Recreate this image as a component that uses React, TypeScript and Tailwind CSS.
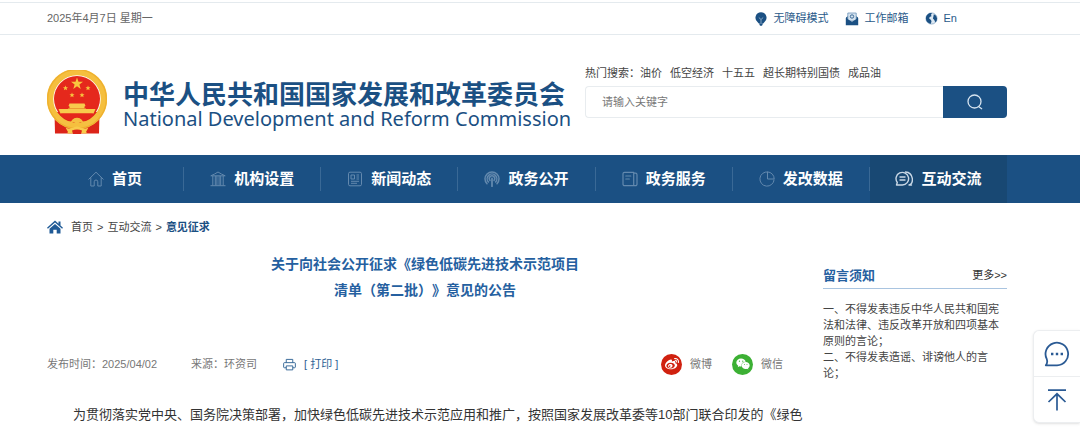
import React from 'react';
import { FaWeibo, FaWeixin } from 'react-icons/fa';

type IconProps = { className?: string };

const HomeIcon = ({ className }: IconProps) => (
  <svg viewBox="0 0 16 16" fill="none" stroke="currentColor" strokeLinejoin="round" strokeLinecap="round" className={className}>
    <path d="M.8 8.200 8 1.200l7.200 7M2.800 6.800V15h3.400v-4.200a1.800 1.800 0 0 1 3.600 0V15h3.400V6.800" />
  </svg>
);

const InstitutionIcon = ({ className }: IconProps) => (
  <svg viewBox="0 0 16 16" fill="none" stroke="currentColor" strokeLinejoin="round" className={className}>
    <path d="M.8 4.800C3 3.800 6 2.500 8 1c2 1.500 5 2.800 7.200 3.800zM.5 14.700h15" />
    <path d="M2.800 5v9.500M5.300 5v9.500M6.900 5v9.500M9.100 5v9.500M10.700 5v9.500M13.200 5v9.500" />
  </svg>
);

const NewsIcon = ({ className }: IconProps) => (
  <svg viewBox="0 0 16 16" fill="none" stroke="currentColor" strokeLinejoin="round" className={className}>
    <rect x="1.500" y="1.200" width="13" height="13.600" rx="1.500" />
    <path d="M4 4h3.500v4H4zM9.500 4H12M9.500 6H12M9.500 8H12M4 10.300h8M4 12.300h6" />
  </svg>
);

const OpenIcon = ({ className }: IconProps) => (
  <svg viewBox="0 0 16 16" fill="none" stroke="currentColor" strokeLinecap="round" className={className}>
    <path d="M3 12.800a7 7 0 1 1 10 0M4.400 11a4.800 4.800 0 1 1 7.200 0M6 9.400a2.700 2.700 0 1 1 4 0" strokeWidth="1.500" />
    <path d="M8 7.500v7.700" strokeWidth="1.800" />
  </svg>
);

const ServiceIcon = ({ className }: IconProps) => (
  <svg viewBox="0 0 16 16" fill="none" stroke="currentColor" strokeWidth="1.200" strokeLinejoin="round" strokeLinecap="round" className={className}>
    <path d="M2.500 1.300h9.200v13.400H2.500A1.500 1.500 0 0 1 1 13.200V2.800a1.500 1.500 0 0 1 1.500-1.500zM11.700 2.200H13.500a1.500 1.500 0 0 1 1.500 1.500v9.500a1.500 1.500 0 0 1-1.500 1.500h-1.800M3.800 5h5M3.800 8h3.500" />
  </svg>
);

const DataIcon = ({ className }: IconProps) => (
  <svg viewBox="0 0 16 16" fill="none" stroke="currentColor" strokeLinejoin="round" className={className}>
    <path d="M9 1A7.100 7.100 0 1 0 15.100 8.500" />
    <path d="M8.500.9V8h6.700A7 7 0 0 0 8.500.9z" />
  </svg>
);

const InteractIcon = ({ className }: IconProps) => (
  <svg viewBox="0 0 18 16" fill="none" stroke="currentColor" strokeWidth="1.400" strokeLinejoin="round" strokeLinecap="round" className={className}>
    <path d="M2.300 11.500A6.300 6.300 0 1 1 7.300 14H1.500z" />
    <path d="M10.500 1c8.500.5 8.500 12.500 3.500 13h2.500M5 6h5M5 9h5" />
  </svg>
);

const NAV_ITEMS = [
  { label: '首页', Icon: HomeIcon },
  { label: '机构设置', Icon: InstitutionIcon },
  { label: '新闻动态', Icon: NewsIcon },
  { label: '政务公开', Icon: OpenIcon },
  { label: '政务服务', Icon: ServiceIcon },
  { label: '发改数据', Icon: DataIcon },
  { label: '互动交流', Icon: InteractIcon, active: true },
];

const HOT_WORDS = ['油价', '低空经济', '十五五', '超长期特别国债', '成品油'];

const SMALL_STARS = [[18.500, 18], [41, 18], [25, 25], [35, 25]];

const Emblem = () => (
  <svg viewBox="0 0 60 64" className="w-[60px] h-16 shrink-0" role="img" aria-label="国徽">
    <path d="M7.500 42 8 63.500h44L52.500 42z" fill="#dc2419" />
    <circle cx="30" cy="29" r="27" fill="none" stroke="#f5bf3e" strokeWidth="6.500" />
    <circle cx="30" cy="29" r="29.300" fill="none" stroke="#eeb02f" strokeWidth="1.200" />
    <circle cx="30" cy="29" r="23" fill="#e5281c" />
    <path d="m30 7.500 1.500 4.300h4.500l-3.600 2.700 1.300 4.400L30 16.300l-3.700 2.600 1.300-4.400-3.600-2.700h4.500z" fill="#f8c63f" />
    {SMALL_STARS.map(([x, y]) => (
      <path key={x} transform={`translate(${x} ${y})`} d="m0-2.500.7 1.700h1.800L1.100.4l.5 1.900L0 1.200l-1.600 1.100.5-1.900-1.400-1.200h1.800z" fill="#f8c63f" />
    ))}
    <path d="M22.500 33.500h15l1 2.500-1 .5V39H48.500l-2 4.500h-33L11.500 39h11v-2.500l-1-.5z" fill="#f8cb4c" />
    <path d="M21 38.500h18" stroke="#e8912c" strokeWidth=".8" />
    <path d="M14 43.500h32c-3 4-8 5-11 4.500-3-1.500-7-1.500-10 0-3 .5-8-.5-11-4.500z" fill="#e5281c" />
    <path d="M11 45c4 5 8 7 13 6.500a7 7 0 0 1 12 0C41 52 45 50 49 45l2 3c-4 6-9 8-14 7.500a8 8 0 0 0-14 0C18 56 13 54 9 48z" fill="#f5c042" />
    <path d="M25 51a5.500 5.500 0 0 1 10 0l-5 3z" fill="#f5c042" />
    <path d="M18.500 57.500c4 2.500 7 0 11.500-1 4.500 1 7.500 3.500 11.500 1l-2.500 4.500 1.500 1.500H20l1-1.500z" fill="#f8cb4c" />
    <path d="M25 60.500c3-1.500 7-1.500 10 0l-1 3.500h-8z" fill="#dc2419" />
  </svg>
);

const BulbIcon = () => (
  <svg viewBox="0 0 14 14" className="size-[14px]">
    <path d="M7 .3a5.500 5.500 0 0 0-3.300 9.900L4.800 11.500h4.400l1.100-1.300A5.500 5.500 0 0 0 7 .3z" fill="#1b5083" />
    <path d="M4.800 5.500 7 7.500l2.200-2M7 7.500V11" fill="none" stroke="#9fbad3" strokeWidth=".8" />
    <path d="M5 11.500h4L8 13.800H6z" fill="#1b5083" />
  </svg>
);

const MailIcon = () => (
  <svg viewBox="0 0 14 14" className="size-[14px]">
    <path d="M1 5.500 3 4v5H1zM13 5.500 11 4v5h2z" fill="#1b5083" />
    <path d="M2.800 1h8.400v8H2.800z" fill="#d5e2ee" stroke="#6f95b9" strokeWidth=".8" />
    <circle cx="7" cy="4.500" r="1.700" fill="none" stroke="#1b5083" strokeWidth=".8" />
    <path d="M.8 6 7 9.800 13.200 6v7.300H.8z" fill="#1b5083" />
  </svg>
);

const GlobeIcon = () => (
  <svg viewBox="0 0 14 14" className="size-[13px]">
    <circle cx="7" cy="7" r="6" fill="#dce8f2" stroke="#7fa1c1" strokeWidth=".8" />
    <path d="M2.500 3C4 1.300 6 1 7.500 1.200L6.500 3l.5 1.500-2 1L4.500 7l2 1.500.5 2L6 12.800C3 12 1 10 1 7c0-1.700.5-3 1.500-4z" fill="#1b5083" />
    <path d="M9.500 2.500 12 4l1 3-.5 2.800-1.500 1.200-1-2.500L8.500 7 9 5z" fill="#1b5083" />
  </svg>
);

const TopBar = () => (
  <div className="h-[33px] border-y border-[#e4eaee] pr-[26px]">
    <div className="mx-auto flex h-full max-w-[960px] items-center justify-between">
      <span className="text-[#666]">2025年4月7日 星期一</span>
      <div className="mr-[50px] flex items-center gap-4 text-[#2a5a8a]">
        <a href="#accessible" className="flex items-center gap-1.5"><BulbIcon />无障碍模式</a>
        <a href="#mail" className="flex items-center gap-1.5"><MailIcon />工作邮箱</a>
        <a href="#en" className="flex items-center gap-1.5"><GlobeIcon />En</a>
      </div>
    </div>
  </div>
);

const Header = () => (
  <header className="h-[120px] pt-[30px] pr-[26px]">
    <div className="mx-auto flex max-w-[960px] items-start justify-between">
      <a href="#home" className="flex gap-4 pt-[5px] text-[#1b5083]">
        <Emblem />
        <div className="flex flex-col pt-[11px] whitespace-nowrap">
          <span className="text-[26px] leading-7 font-bold">中华人民共和国国家发展和改革委员会</span>
          <span className="font-['Noto_Sans'] text-xl leading-5">National Development and Reform Commission</span>
        </div>
      </a>
      <form className="w-[422px]" onSubmit={(e) => e.preventDefault()}>
        <div className="flex gap-2 leading-4 text-[#444]">
          <label htmlFor="keyword" className="-mr-2">热门搜索：</label>
          {HOT_WORDS.map((word) => (
            <a key={word} href="#search">{word}</a>
          ))}
        </div>
        <div className="mt-[5px] flex h-8">
          <input
            id="keyword"
            type="text"
            placeholder="请输入关键字"
            className="min-w-0 flex-1 rounded-l border border-r-0 border-[#e8ecef] px-4 outline-none placeholder:text-[#777]"
          />
          <button type="submit" aria-label="搜索" className="flex w-16 items-center justify-center rounded-r bg-[#1b5083] text-[#d6e3ef]">
            <svg viewBox="0 0 16 16" fill="none" stroke="currentColor" strokeWidth="1.300" strokeLinecap="round" className="size-4">
              <circle cx="7.500" cy="7.500" r="6.500" />
              <path d="m11.500 12.500 3.200 2.200" />
            </svg>
          </button>
        </div>
      </form>
    </div>
  </header>
);

const Nav = () => (
  <nav className="bg-[#1b5083] pr-[26px]">
    <ul className="mx-auto flex h-12 max-w-[960px]">
      {NAV_ITEMS.map(({ label, Icon, active }, index) => (
        <li key={label} className={active ? 'flex flex-1 items-center bg-[#184873]' : 'flex flex-1 items-center'}>
          <a href="#nav" className="flex flex-1 items-center justify-center gap-2 text-[15px] font-bold text-white">
            <Icon className={active ? 'h-4 w-[18px] text-[#c9d8e6]' : 'size-4 text-[#6389ae]'} />
            {label}
          </a>
          {index < NAV_ITEMS.length - 1 && <span className="h-6 w-px bg-[#3a6996]" />}
        </li>
      ))}
    </ul>
  </nav>
);

const Breadcrumb = () => (
  <div className="flex h-12 items-center gap-2 text-[#444]">
    <svg viewBox="0 0 16 14" className="h-[14px] w-4" fill="#1f5a96">
      <path d="M8 .5 11.500 3.700V1.500h2v4L16 7.700l-.9 1L8 2.500.9 8.700 0 7.700z" />
      <path d="m8 4 5.500 4.700V13.500H9.700V9.800H6.300v3.700H2.500V8.700z" />
    </svg>
    <div className="flex gap-1">
      <a href="#home">首页</a>
      <span>&gt;</span>
      <a href="#interact">互动交流</a>
      <span>&gt;</span>
      <a href="#opinion" className="font-bold text-[#1b5083]">意见征求</a>
    </div>
  </div>
);

const Article = () => (
  <article className="min-w-0 flex-1">
    <h1 className="text-center text-sm leading-[26px] font-bold text-[#2560a0] [text-spacing-trim:space-all]">
      关于向社会公开征求《绿色低碳先进技术示范项目
      <br />
      清单（第二批）》意见的公告
    </h1>
    <div className="mt-12 flex h-[26px] items-center justify-between pr-5 text-[#777]">
      <div className="flex items-center">
        <span>发布时间：2025/04/02</span>
        <span className="ml-[34px]">来源：环资司</span>
        <button type="button" className="ml-[26px] flex items-center gap-2 text-[#2f6294]">
          <svg viewBox="0 0 14 14" fill="none" stroke="currentColor" strokeLinejoin="round" className="size-[13px]">
            <path d="M3.500 5V1.500h7V5M3.500 10.500h-2A.8.8 0 0 1 .7 9.700V5.800c0-.5.4-.8.8-.8h11c.4 0 .8.300.8.800v3.900c0 .5-.4.800-.8.800h-2M3.500 8.500h7v4.300h-7z" />
          </svg>
          [ 打印 ]
        </button>
      </div>
      <div className="flex items-center gap-5">
        <a href="#weibo" className="flex items-center gap-2">
          <span className="flex size-[21px] items-center justify-center rounded-full bg-[#d0210f] text-white">
            <FaWeibo size={14} />
          </span>
          微博
        </a>
        <a href="#wechat" className="flex items-center gap-2">
          <span className="flex size-[21px] items-center justify-center rounded-full bg-[#3cb034] text-white">
            <FaWeixin size={14} />
          </span>
          微信
        </a>
      </div>
    </div>
    <p className="mt-6 indent-[2em] text-[13px] leading-7 text-[#333]">
      为贯彻落实党中央、国务院决策部署，加快绿色低碳先进技术示范应用和推广，按照国家发展改革委等10部门联合印发的《绿色
    </p>
  </article>
);

const Notice = () => (
  <aside className="w-[184px] pt-3">
    <div className="flex h-[26px] items-center justify-between border-b border-[#a9c4e0]">
      <h2 className="text-[13px] font-bold text-[#2560a0]">留言须知</h2>
      <a href="#more" className="text-[#333]">更多&gt;&gt;</a>
    </div>
    <div className="mt-3 leading-4 text-[#444]">
      <p>一、不得发表违反中华人民共和国宪法和法律、违反改革开放和四项基本原则的言论；</p>
      <p>二、不得发表造谣、诽谤他人的言论；</p>
    </div>
  </aside>
);

const FloatTools = () => (
  <div className="fixed right-0 bottom-1.5 w-[47px] divide-y divide-[#eceef0] rounded-l-md border border-r-0 border-[#eceef0] bg-white text-[#2a5a94] shadow-sm">
    <button type="button" aria-label="留言" className="flex h-[46px] w-full items-center justify-center">
      <svg viewBox="0 0 26 26" fill="none" stroke="currentColor" strokeWidth="1.800" strokeLinejoin="round" className="size-[26px]">
        <path d="M2.800 18.200A11.300 11.300 0 1 1 13 24.300H1.800c1.300-1.500 2-3 1-6.100z" />
        <path d="M7 13h2.400M11.800 13h2.400M16.600 13H19" strokeWidth="2.400" />
      </svg>
    </button>
    <button type="button" aria-label="返回顶部" className="flex h-[45px] w-full items-center justify-center">
      <svg viewBox="0 0 20 22" fill="none" stroke="currentColor" strokeWidth="1.700" className="h-[22px] w-5">
        <path d="M1 1.200h18M10 21.500V5M1.500 13 10 4.800l8.500 8.200" />
      </svg>
    </button>
  </div>
);

const App: React.FC = () => {
  return (
    <div className="bg-white pt-0.5 font-['Liberation_Sans','Noto_Sans_CJK_SC',sans-serif] text-[11px]">
      <TopBar />
      <Header />
      <Nav />
      <main className="pr-[26px]">
        <div className="mx-auto max-w-[960px]">
          <Breadcrumb />
          <div className="flex items-start gap-5">
            <Article />
            <Notice />
          </div>
        </div>
      </main>
      <FloatTools />
    </div>
  );
};

export default App;
